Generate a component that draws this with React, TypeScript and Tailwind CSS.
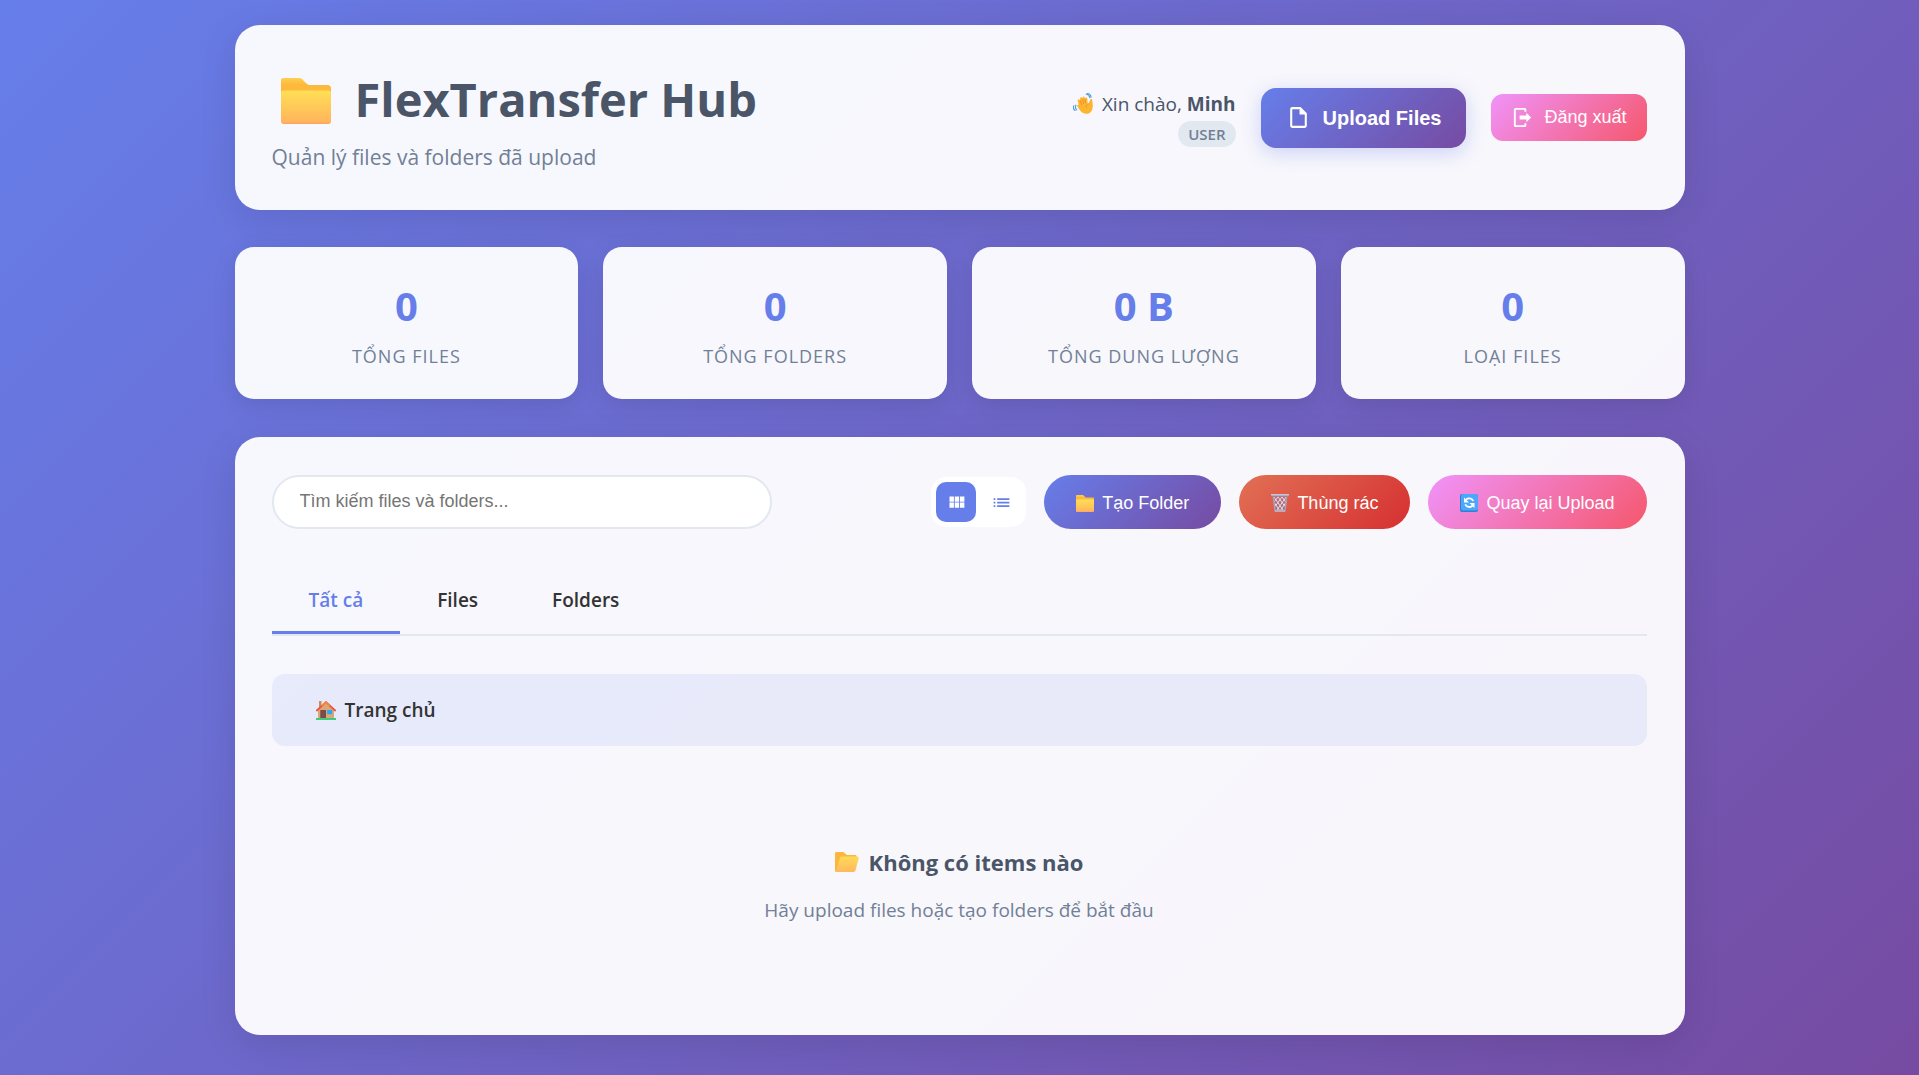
import React, { useState } from "react";

const ui = "font-['Open_Sans','Noto_Sans',sans-serif]";
const arial = "font-['Liberation_Sans',Arial,sans-serif]";

function FolderIcon({ className }: { className: string }) {
  return (
    <svg viewBox="0 0 48 46" preserveAspectRatio="none" className={className} aria-hidden="true">
      <defs>
        <linearGradient id="folder-back" x1="0" y1="0" x2="0" y2="1">
          <stop offset="0" stopColor="#ffcf4f" />
          <stop offset="0.3" stopColor="#fdb93c" />
        </linearGradient>
        <linearGradient id="folder-front" x1="0" y1="0" x2="0" y2="1">
          <stop offset="0" stopColor="#ffdf55" />
          <stop offset="0.94" stopColor="#ffb55c" />
          <stop offset="1" stopColor="#ff9a6c" />
        </linearGradient>
      </defs>
      <path d="M2 0h15.500c1 0 1.800.4 2.500 1.100l5 5c.6.600 1.400.9 2.300.9H45c1.600 0 3 1.400 3 3v12H0V2C0 .9.900 0 2 0Z" fill="url(#folder-back)" />
      <path d="M2.500 12.500h43c1.400 0 2.500 1.100 2.500 2.500v28.500c0 1.400-1.100 2.500-2.500 2.500h-43C1.100 46 0 44.900 0 43.500V15c0-1.400 1.100-2.500 2.500-2.500Z" fill="url(#folder-front)" />
    </svg>
  );
}

function OpenFolderIcon({ className }: { className: string }) {
  return (
    <svg viewBox="0 0 24 20" className={className} aria-hidden="true">
      <defs>
        <linearGradient id="open-front" x1="0" y1="0" x2="0" y2="1">
          <stop offset="0" stopColor="#ffda55" />
          <stop offset="1" stopColor="#ffb960" />
        </linearGradient>
      </defs>
      <path d="M1.500 0h6.200c.6 0 1.100.2 1.500.6l1.900 1.900c.3.300.7.500 1.100.5H20c1 0 1.700.7 1.700 1.700V10L18 20H1.500C.7 20 0 19.300 0 18.500v-17C0 .7.700 0 1.500 0Z" fill="#fcb640" />
      <path d="M6.800 4.500h15.700c.8 0 1.400.8 1.200 1.600l-3.200 12.500c-.2.800-.9 1.400-1.800 1.400H2c-.8 0-1-.7-.8-1.400L4.900 5.900c.2-.8 1-1.400 1.900-1.400Z" fill="url(#open-front)" />
    </svg>
  );
}

function WaveIcon({ className }: { className: string }) {
  return (
    <svg viewBox="0 0 20 21" className={className} aria-hidden="true">
      <path d="M13.200 1.300c2 .2 3.300 1.400 3.600 3.400M14.200.4c2.200.3 3.600 1.700 3.900 3.700M2.900 12.200c-.9 1.700-.6 3.300.8 4.600M.8 12.800c-.8 1.700-.3 3.500 1.200 4.700" fill="none" stroke="#4a9fe0" strokeWidth="1.100" strokeLinecap="round" />
      <path d="M5.400 10.500 4.700 7.600c-.3-1.300 1.300-1.800 1.800-.6l.7.600-.1-2.300c0-1.300 1.700-1.500 2-.3l.4 1 .1-1.500c.2-1.200 1.800-1.200 2 0l.3 1.500.5-1c.5-1 1.800-.7 1.900.5l.2 4.500 1 .8 1.400-3.600c.3-.9.900-1.300 2.100-1.200.3 2.200.8 4 .8 6.700 0 4.800-2.400 8.100-6.200 8.100-3.200 0-5.100-1.500-7-4.100l-2.200-3.200c-.6-1 .1-1.700 1-1.300Z" fill="#fdb52f" />
      <path d="m7.200 7.600 1.600 4M9.500 6l1.300 4.500M11.900 6l.7 4M15.500 10.800c-1.700.6-2.600 1.900-2.500 3.600" fill="none" stroke="#e58a1f" strokeWidth="0.700" strokeLinecap="round" />
    </svg>
  );
}

function TrashIcon({ className }: { className: string }) {
  return (
    <svg viewBox="0 0 18 18" className={className} aria-hidden="true">
      <path d="M1.500 2h15l-1.700 14.500c-.1.900-.7 1.500-1.500 1.500H4.700c-.8 0-1.400-.6-1.500-1.500Z" fill="#b26d78" />
      <path d="m3 3 9 13M7 3l7 9.500M11 3l4.500 6M3.500 9l5.500 8M15 3 6 16M11 3l-7 9.500M7 3 3 8M14.500 9 9 17" stroke="#e6dce8" strokeWidth="1" />
      <path d="m2.400 3 1.500 13M15.600 3l-1.500 13" stroke="#aaa0b8" strokeWidth="1.500" />
      <path d="M3.500 16h11l-.2 2H3.700ZM0 0h18l-.4 2.200H.4Z" fill="#b7adc2" />
      <path d="M0 0h18v1H0Z" fill="#cbc5d1" />
    </svg>
  );
}

function RefreshIcon({ className }: { className: string }) {
  return (
    <svg viewBox="0 0 18 18" className={className} aria-hidden="true">
      <rect width="18" height="18" rx="2" fill="#2e80d2" />
      <rect x="1" width="17" height="16.500" rx="2" fill="#4ca7fa" />
      <path d="M6 5.600C8.200 3.700 11.700 4 13.400 7M12.600 11.800C10.400 13.700 6.900 13.400 5.200 10.400" fill="none" stroke="#fff" strokeWidth="1.800" />
      <path d="M4 3.500v5h5ZM14.500 14V9h-5Z" fill="#fff" />
    </svg>
  );
}

function HouseIcon({ className }: { className: string }) {
  return (
    <svg viewBox="0 0 20 19" className={className} aria-hidden="true">
      <path d="M3 0h2.500v6H3Z" fill="#c98d5c" />
      <path d="M2 8.500 10 1.500l8 7V18H2Z" fill="#dba777" />
      <path d="M4 9h6v8.500H4Z" fill="#7b4c46" />
      <path d="M4 9h1v8.500H4Z" fill="#94625a" />
      <path d="M11.200 9h5v4.200h-5Z" fill="#25a8f5" />
      <path d="M0 17h20v2H0Z" fill="#3ecb7c" />
      <path d="M.8 9.500 10 1.200l9.200 8.300" fill="none" stroke="#ec5340" strokeWidth="1.800" strokeLinecap="round" />
      <path d="m6 4.800 4-3.500 4 3.500" fill="none" stroke="#f4844a" strokeWidth="1.800" />
    </svg>
  );
}

function Glyph({ d, className }: { d: string; className: string }) {
  return (
    <svg viewBox="0 0 24 24" className={className} fill="currentColor" aria-hidden="true">
      <path d={d} />
    </svg>
  );
}

const fileOutline =
  "M14,2H6A2,2 0 0,0 4,4V20A2,2 0 0,0 6,22H18A2,2 0 0,0 20,20V8L14,2M18,20H6V4H13V9H18V20Z";
const logout =
  "M16,17V14H9V10H16V7L21,12L16,17M14,2A2,2 0 0,1 16,4V6H14V4H5V20H14V18H16V20A2,2 0 0,1 14,22H5A2,2 0 0,1 3,20V4A2,2 0 0,1 5,2H14Z";
const gridGlyph = "M4,11H9V5H4M4,18H9V12H4M10,18H15V12H10M16,18H21V12H16M10,11H15V5H10M16,5V11H21V5";
const listGlyph =
  "M3,13H5V11H3V13M3,17H5V15H3V17M3,9H5V7H3V9M7,13H21V11H7V13M7,17H21V15H7V17M7,7V9H21V7H7Z";

const stats = [
  { value: "0", label: "Tổng files" },
  { value: "0", label: "Tổng folders" },
  { value: "0 B", label: "Tổng dung lượng" },
  { value: "0", label: "Loại files" },
];

const tabs = ["Tất cả", "Files", "Folders"];

const pill = `flex h-[54px] items-center gap-2 rounded-full px-8 pt-[2px] text-[18px] text-white ${arial}`;

export default function App() {
  const [tab, setTab] = useState("Tất cả");
  const [view, setView] = useState("grid");

  return (
    <div className={`min-h-screen bg-[linear-gradient(135deg,#667eea_0%,#764ba2_100%)] p-[25px] text-[#333333] ${ui}`}>
      <div className="mx-auto flex min-h-[1010px] max-w-[1450px] flex-col">
        <header className="flex items-center justify-between rounded-[25px] bg-white/95 p-[38px] pl-[37px] shadow-[0_10px_38px_rgba(0,0,0,0.1)]">
          <div>
            <h1 className="flex items-center gap-6 pl-[9px] text-[47px] leading-[72px] font-bold text-[#4a5568]">
              <FolderIcon className="mt-1 h-[46px] w-[50px]" />
              FlexTransfer Hub
            </h1>
            <p className="mt-[7px] text-[21px] leading-[30px] text-[#718096]">Quản lý files và folders đã upload</p>
          </div>
          <div className="flex items-center gap-[25px]">
            <div className="flex flex-col items-end gap-[2px]">
              <p className="flex items-center text-[19px] leading-[30px] text-[#4a5568]">
                <WaveIcon className="mr-[9px] h-[21px] w-5" />
                <span>
                  Xin chào, <strong>Minh</strong>
                </span>
              </p>
              <span className="rounded-full bg-[#e2e8f0] px-[10px] text-[15px] leading-[26px] font-semibold text-[#718096]">USER</span>
            </div>
            <button type="button" className={`flex h-[60px] items-center gap-3 rounded-[15px] bg-[linear-gradient(135deg,#667eea,#764ba2)] px-[25px] text-[20px] font-bold text-white shadow-[0_5px_19px_rgba(102,126,234,0.3)] ${arial}`}>
              <Glyph d={fileOutline} className="size-[25px]" />
              Upload Files
            </button>
            <button type="button" className={`flex h-[47px] items-center gap-[10px] rounded-[12px] bg-[linear-gradient(135deg,#f093fb,#f5576c)] px-5 text-[18px] text-white ${arial}`}>
              <Glyph d={logout} className="size-[23px]" />
              Đăng xuất
            </button>
          </div>
        </header>

        <section className="mt-[37px] grid grid-cols-4 gap-[25px]">
          {stats.map((s) => (
            <div key={s.label} className="rounded-[19px] bg-white/95 px-6 pt-[31px] pb-7 text-center shadow-[0_6px_25px_rgba(0,0,0,0.1)]">
              <div className="text-[40px] leading-[56px] font-bold text-[#667eea]">{s.value}</div>
              <div className="mt-[7px] text-[18px] leading-[30px] tracking-[1px] text-[#718096] uppercase">{s.label}</div>
            </div>
          ))}
        </section>

        <main className="mt-[38px] flex flex-1 flex-col rounded-[25px] bg-white/95 p-[38px] pl-[37px] shadow-[0_10px_38px_rgba(0,0,0,0.1)]">
          <div className="flex items-center justify-between">
            <input
              type="search"
              aria-label="Tìm kiếm files và folders"
              placeholder="Tìm kiếm files và folders..."
              className={`h-[54px] w-[500px] rounded-full border-2 border-[#e2e8f0] bg-white px-[26px] pb-[2px] text-[18px] placeholder:text-[#757575] ${arial}`}
            />
            <div className="flex items-center gap-[18px]">
              <div className="flex gap-[5px] rounded-[15px] bg-white p-[5px]">
                <button type="button" aria-label="Grid" aria-pressed={view === "grid"} onClick={() => setView("grid")} className="flex size-10 items-center justify-center rounded-[10px] text-[#667eea] aria-pressed:bg-[#667eea] aria-pressed:text-white">
                  <Glyph d={gridGlyph} className="size-[21px]" />
                </button>
                <button type="button" aria-label="List" aria-pressed={view === "list"} onClick={() => setView("list")} className="flex size-10 items-center justify-center rounded-[10px] text-[#667eea] aria-pressed:bg-[#667eea] aria-pressed:text-white">
                  <Glyph d={listGlyph} className="size-[21px]" />
                </button>
              </div>
              <button type="button" className={`${pill} bg-[linear-gradient(135deg,#667eea,#764ba2)]`}>
                <FolderIcon className="h-[17px] w-[18px]" />
                Tạo Folder
              </button>
              <button type="button" className={`${pill} bg-[linear-gradient(135deg,#e17055,#d63031)]`}>
                <TrashIcon className="size-[18px]" />
                Thùng rác
              </button>
              <button type="button" className={`${pill} bg-[linear-gradient(135deg,#f093fb,#f5576c)]`}>
                <RefreshIcon className="size-[18px]" />
                Quay lại Upload
              </button>
            </div>
          </div>

          <nav className="mt-[38px] flex border-b-2 border-[#e2e8f0]">
            {tabs.map((t) => (
              <button
                key={t}
                type="button"
                aria-current={t === tab ? "page" : undefined}
                onClick={() => setTab(t)}
                className="border-b-[3px] border-transparent px-[37px] pt-[18px] pb-4 text-[19px] leading-[30px] font-semibold aria-[current=page]:border-[#667eea] aria-[current=page]:text-[#667eea]"
              >
                {t}
              </button>
            ))}
          </nav>

          <nav aria-label="Breadcrumb" className="mt-[38px] flex h-[72px] items-center rounded-[13px] bg-[#667eea]/10 px-11">
            <a href="#" className="flex items-center gap-[9px] text-[19px] font-semibold">
              <HouseIcon className="h-[19px] w-5" />
              Trang chủ
            </a>
          </nav>

          <div className="flex flex-col items-center pt-24 pb-10 text-center">
            <h2 className="flex items-center gap-[10px] text-[22px] leading-[40px] font-bold text-[#4a5568]">
              <OpenFolderIcon className="h-5 w-6" />
              Không có items nào
            </h2>
            <p className="mt-3 text-[19px] leading-[32px] text-[#718096]">Hãy upload files hoặc tạo folders để bắt đầu</p>
          </div>
        </main>
      </div>
    </div>
  );
}
